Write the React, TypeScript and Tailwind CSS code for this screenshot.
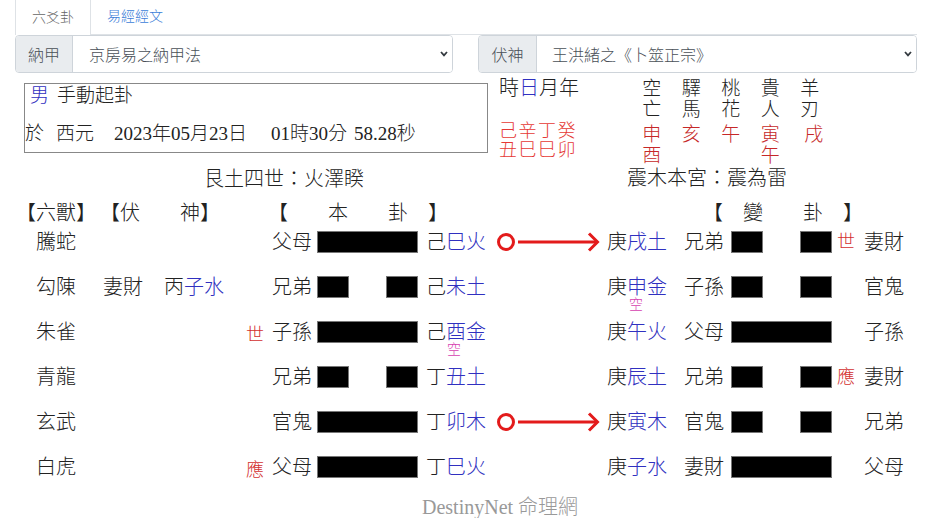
import React from 'react';

type Row = {
  beast: string;
  fuRel?: string;
  fuStem?: string;
  fuBranch?: string;
  leftMark?: string;
  rel: string;
  yang: boolean;
  stem: string;
  branch: string;
  empty?: boolean;
  moving?: boolean;
  cStem: string;
  cBranch: string;
  cEmpty?: boolean;
  cRel: string;
  cYang: boolean;
  rightMark?: string;
  rightRel: string;
};

const rows: Row[] = [
  { beast: '騰蛇', rel: '父母', yang: true, stem: '己', branch: '巳火', moving: true, cStem: '庚', cBranch: '戌土', cRel: '兄弟', cYang: false, rightMark: '世', rightRel: '妻財' },
  { beast: '勾陳', fuRel: '妻財', fuStem: '丙', fuBranch: '子水', rel: '兄弟', yang: false, stem: '己', branch: '未土', cStem: '庚', cBranch: '申金', cEmpty: true, cRel: '子孫', cYang: false, rightRel: '官鬼' },
  { beast: '朱雀', leftMark: '世', rel: '子孫', yang: true, stem: '己', branch: '酉金', empty: true, cStem: '庚', cBranch: '午火', cRel: '父母', cYang: true, rightRel: '子孫' },
  { beast: '青龍', rel: '兄弟', yang: false, stem: '丁', branch: '丑土', cStem: '庚', cBranch: '辰土', cRel: '兄弟', cYang: false, rightMark: '應', rightRel: '妻財' },
  { beast: '玄武', rel: '官鬼', yang: true, stem: '丁', branch: '卯木', moving: true, cStem: '庚', cBranch: '寅木', cRel: '官鬼', cYang: false, rightRel: '兄弟' },
  { beast: '白虎', leftMark: '應', rel: '父母', yang: true, stem: '丁', branch: '巳火', cStem: '庚', cBranch: '子水', cRel: '妻財', cYang: true, rightRel: '父母' },
];

function Bar({ yang }: { yang: boolean }) {
  if (yang) {
    return <div className="w-[101px] h-[22px] bg-black border border-[#777] shrink-0" />;
  }
  return (
    <div className="w-[101px] h-[22px] flex justify-between shrink-0">
      <div className="w-[32px] h-full bg-black border border-[#777]" />
      <div className="w-[32px] h-full bg-black border border-[#777]" />
    </div>
  );
}

function Arrow() {
  return (
    <svg width="104" height="20" viewBox="0 0 104 20" className="shrink-0">
      <circle cx="10" cy="10" r="7.5" fill="none" stroke="#e31b1b" strokeWidth="3" />
      <line x1="22" y1="10" x2="100" y2="10" stroke="#e31b1b" strokeWidth="3" />
      <polyline points="93,1.5 101.5,10 93,18.5" fill="none" stroke="#e31b1b" strokeWidth="3" strokeLinejoin="miter" />
    </svg>
  );
}

function Chevron() {
  return (
    <svg width="8" height="6" viewBox="0 0 8 6" className="shrink-0">
      <polyline points="1,1 4,4.3 7,1" fill="none" stroke="#343a40" strokeWidth="1.8" />
    </svg>
  );
}

function HexRow({ r }: { r: Row }) {
  return (
    <div className="flex items-center h-[45px] pl-[36px] text-[20px] leading-[28px]">
      <div className="w-[67px] shrink-0">{r.beast}</div>
      <div className="w-[61px] shrink-0">{r.fuRel ?? ''}</div>
      <div className="w-[82px] shrink-0">
        {r.fuStem ? (
          <>
            {r.fuStem}
            <span className="text-[#3030c0]">{r.fuBranch}</span>
          </>
        ) : null}
      </div>
      <div className="w-[26px] shrink-0 text-[18px] text-[#d32f2f] translate-y-[3px]">{r.leftMark ?? ''}</div>
      <div className="w-[45px] shrink-0">{r.rel}</div>
      <Bar yang={r.yang} />
      <div className="ml-[8px] w-[70px] shrink-0 relative h-[28px]">
        {r.stem}
        <span className="text-[#3030c0]">{r.branch}</span>
        {r.empty ? (
          <span className="absolute left-[21px] top-[25px] text-[14px] leading-[14px] text-[#d63fb0]">空</span>
        ) : null}
      </div>
      <div className="w-[104px] h-[20px] shrink-0 flex items-center">{r.moving ? <Arrow /> : null}</div>
      <div className="ml-[7px] w-[77px] shrink-0 relative h-[28px]">
        {r.cStem}
        <span className="text-[#3030c0]">{r.cBranch}</span>
        {r.cEmpty ? (
          <span className="absolute left-[22px] top-[25px] text-[14px] leading-[14px] text-[#d63fb0]">空</span>
        ) : null}
      </div>
      <div className="w-[47px] shrink-0">{r.cRel}</div>
      <Bar yang={r.cYang} />
      <div className="ml-[5px] w-[27px] shrink-0 text-[18px] text-[#d32f2f]">{r.rightMark ?? ''}</div>
      <div className="shrink-0">{r.rightRel}</div>
    </div>
  );
}

const shensha: { top: string; bottom: string; v1: string; v2?: string; shift?: boolean }[] = [
  { top: '空', bottom: '亡', v1: '申', v2: '酉' },
  { top: '驛', bottom: '馬', v1: '亥' },
  { top: '桃', bottom: '花', v1: '午' },
  { top: '貴', bottom: '人', v1: '寅', v2: '午' },
  { top: '羊', bottom: '刃', v1: '戌', shift: true },
];

export default function App() {
  return (
    <div className="w-[929px] h-[518px] bg-white overflow-hidden text-[#222] font-light font-['Liberation_Serif','Noto_Sans_CJK_TC',serif]">
      {/* Tabs */}
      <div className="ml-[15px] w-[902px] h-[35px] border-b border-[#dee2e6] flex font-['Noto_Sans_CJK_TC',sans-serif] text-[14px]">
        <div className="w-[76px] h-[35px] border-x border-[#dee2e6] bg-white flex items-center justify-center text-[#666] pb-[3px]">
          六爻卦
        </div>
        <div className="px-[16px] h-[34px] flex items-center text-[#3b7dd8] pb-[3px]">易經經文</div>
      </div>

      {/* Selects */}
      <div className="flex h-[38px] font-['Noto_Sans_CJK_TC',sans-serif] text-[16px] text-[#495057]">
        <div className="ml-[15px] w-[438px] flex border border-[#ced4da] rounded-[4px] overflow-hidden">
          <div className="w-[57px] bg-[#e9ecef] border-r border-[#ced4da] flex items-center justify-center">納甲</div>
          <div className="flex-1 flex items-center justify-between pl-[16px] pr-[4px] bg-white">
            <span>京房易之納甲法</span>
            <Chevron />
          </div>
        </div>
        <div className="ml-[25px] w-[439px] flex border border-[#ced4da] rounded-[4px] overflow-hidden">
          <div className="w-[58px] bg-[#e9ecef] border-r border-[#ced4da] flex items-center justify-center">伏神</div>
          <div className="flex-1 flex items-center justify-between pl-[15px] pr-[4px] bg-white">
            <span>王洪緒之《卜筮正宗》</span>
            <Chevron />
          </div>
        </div>
      </div>

      {/* Middle section */}
      <div className="flex mt-[5px]">
        <div className="w-[499px] shrink-0">
          <div className="ml-[24px] mt-[5px] w-[464px] h-[70px] border border-[#888] text-[19px]">
            <div className="h-[24px] leading-[24px] pl-[5px] whitespace-nowrap">
              <span className="text-[#3030c0]">男</span>
              <span className="ml-[8px]">手動起卦</span>
            </div>
            <div className="mt-[13px] h-[25px] leading-[25px] whitespace-nowrap">
              <span>於</span>
              <span className="ml-[12px]">西元</span>
              <span className="ml-[20px]">2023年05月23日</span>
              <span className="ml-[24px]">01時30分</span>
              <span className="ml-[7px]">58.28秒</span>
            </div>
          </div>
          <div className="mt-[16px] pl-[204px] text-[20px] leading-[21px] whitespace-nowrap">艮土四世：火澤睽</div>
        </div>
        <div className="flex flex-col">
          <div className="flex">
            <div className="w-[133px] shrink-0">
              <div className="text-[20px] leading-[21px]">
                時<span className="text-[#3030c0]">日</span>月年
              </div>
              <div className="mt-[23px] text-[18px] tracking-[1.5px] leading-[18.5px] text-[#e53935]">
                <div className="h-[18.5px]">己辛丁癸</div>
                <div className="h-[18.5px]">丑巳巳卯</div>
              </div>
            </div>
            <div className="flex text-[19px] leading-[21px]">
              {shensha.map((c) => (
                <div key={c.top} className="w-[39.5px] flex flex-col items-center">
                  <div>{c.top}</div>
                  <div>{c.bottom}</div>
                  <div className={`mt-[3.5px] text-[#c62828] ${c.shift ? 'translate-x-[4px]' : ''}`}>{c.v1}</div>
                  <div className="text-[#c62828] h-[21px]">{c.v2 ?? ''}</div>
                </div>
              ))}
            </div>
          </div>
          <div className="mt-[2.5px] pl-[128px] text-[20px] leading-[21px] whitespace-nowrap">震木本宮：震為雷</div>
        </div>
      </div>

      {/* Header */}
      <div className="mt-[14.5px] h-[16px] leading-[16px] text-[20px] flex pl-[16px] whitespace-nowrap">
        <span className="w-[80px] shrink-0">【六獸】</span>
        <span className="ml-[4px] w-[120px] shrink-0">【伏　　神】</span>
        <span className="ml-[48px] w-[180px] shrink-0">【　　本　　卦　】</span>
        <span className="ml-[255px] shrink-0">【　變　　卦　】</span>
      </div>

      {/* Rows */}
      <div className="mt-[-1.5px] flex flex-col whitespace-nowrap">
        {rows.map((r, i) => (
          <HexRow key={i} r={r} />
        ))}
      </div>

      {/* Footer */}
      <div className="mt-[6.5px] pl-[422px] text-[20px] leading-[22px] text-[#999] whitespace-nowrap">DestinyNet 命理網</div>
    </div>
  );
}
